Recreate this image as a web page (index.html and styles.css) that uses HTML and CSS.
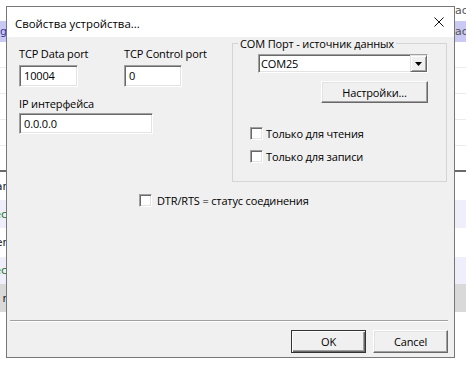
FILE: index.html
```html
<!DOCTYPE html>
<html>
<head>
<meta charset="utf-8">
<link rel="stylesheet" href="styles.css">
</head>
<body>
<div class="app">
  <div class="row h21"><div class="cl"></div><div class="cr dim">ac</div></div>
  <div class="row h21 sel"><div class="cl blue">g</div><div class="cr dim">ac</div></div>
  <div class="row h26 line"><div class="cl"></div><div class="cr"></div></div>
  <div class="row h26 line"><div class="cl"></div><div class="cr"></div></div>
  <div class="row h26 line"><div class="cl"></div><div class="cr"></div></div>
  <div class="row h26 line"><div class="cl"></div><div class="cr"></div></div>
  <div class="row h24"><div class="cl"></div><div class="cr"></div></div>
  <div class="divider"></div>
  <div class="row h28"><div class="cl">ar</div><div class="cr"></div></div>
  <div class="row h28 alt"><div class="cl green">ec</div><div class="cr"></div></div>
  <div class="row h29"><div class="cl">er</div><div class="cr"></div></div>
  <div class="row h27 alt"><div class="cl green">ec</div><div class="cr"></div></div>
  <div class="row h28 grey"><div class="cl">r</div><div class="cr"></div></div>
  <div class="row rest"><div class="cl"></div><div class="cr"></div></div>
</div>

<div class="dialog">
  <div class="titlebar">
    <span class="title">Свойства устройства...</span>
    <svg class="close" viewBox="0 0 10 10" width="10" height="10"><path d="M0.5 0.5L9.5 9.5M9.5 0.5L0.5 9.5" stroke="#111" stroke-width="1" fill="none"/></svg>
  </div>
  <div class="body">
    <div class="top">
      <div class="left">
        <div class="pair">
          <div class="field w59"><div class="lbl">TCP Data port</div><div class="edit">10004</div></div>
          <div class="field w58"><div class="lbl">TCP Control port</div><div class="edit">0</div></div>
        </div>
        <div class="field ip w134"><div class="lbl">IP интерфейса</div><div class="edit">0.0.0.0</div></div>
      </div>
      <fieldset class="group">
        <legend>COM Порт - источник данных</legend>
        <div class="gin">
          <div class="combo-wrap">
            <div class="combo"><span class="ctext">COM25</span><span class="drop"><svg viewBox="0 0 7 4" width="7" height="4"><polygon points="0,0 7,0 3.5,4" fill="#000"/></svg></span></div>
            <div class="btn setup">Настройки...</div>
          </div>
          <div class="chk first"><span class="box"></span><span>Только для чтения</span></div>
          <div class="chk second"><span class="box"></span><span>Только для записи</span></div>
        </div>
      </fieldset>
    </div>
    <div class="chk dtr"><span class="box"></span><span>DTR/RTS = статус соединения</span></div>
    <div class="sep"></div>
    <div class="buttons">
      <div class="btn ok">OK</div>
      <div class="btn">Cancel</div>
    </div>
  </div>
</div>
</body>
</html>
```

FILE: styles.css
```css
* { box-sizing: border-box; }
html, body { margin: 0; padding: 0; }
body {
  width: 466px;
  height: 368px;
  overflow: hidden;
  background: #fff;
  position: relative;
  font-family: "Open Sans", "Noto Sans", sans-serif;
  font-size: 11px;
  color: #000;
}

/* underlying application */
.app {
  width: 466px;
  height: 368px;
  display: flex;
  flex-direction: column;
  font-family: "DejaVu Sans", sans-serif;
  font-size: 11px;
  color: #222;
}
.row {
  display: flex;
  justify-content: space-between;
  align-items: center;
  flex: none;
}
.h21 { height: 21px; }
.h24 { height: 24px; }
.h26 { height: 26px; }
.h27 { height: 27px; }
.h28 { height: 28px; }
.h29 { height: 29px; }
.rest { flex: 1; }
.line { border-bottom: 1px solid #ececec; }
.sel { background: #c9c9f4; }
.alt { background: #efeffb; }
.grey { background: #d9d9d9; }
.divider { height: 2px; background: #6a6a6a; flex: none; }
.cl {
  width: 7px;
  overflow: hidden;
  white-space: nowrap;
  display: flex;
  justify-content: flex-end;
}
.cr {
  width: 11px;
  overflow: hidden;
  white-space: nowrap;
}
.dim { color: #555; }
.blue { color: #3a3a9a; }
.green { color: #2c7a2c; }

/* dialog window */
.dialog {
  position: absolute;
  left: 6px;
  top: 6px;
  width: 449px;
  height: 352px;
  border: 1px solid #777;
  background: #f0f0f0;
  display: flex;
  flex-direction: column;
  letter-spacing: -0.15px;
}
.titlebar {
  height: 30px;
  flex: none;
  background: #fff;
  display: flex;
  align-items: center;
  justify-content: space-between;
  padding: 2px 10px 0 8px;
  font-size: 11.4px;
  letter-spacing: 0;
}
.close { display: block; margin-top: -2px; }
.body {
  flex: 1;
  display: flex;
  flex-direction: column;
  padding: 0 6px 4px 3px;
}
.top {
  display: flex;
  justify-content: space-between;
  padding: 0 1px 0 9px;
}
.left { padding-top: 9px; }
.pair { display: flex; gap: 46px; }
.w59 { width: 59px; }
.w58 { width: 58px; }
.w134 { width: 134px; }
.lbl {
  height: 15px;
  line-height: 15px;
  white-space: nowrap;
}
.edit {
  margin-top: 4px;
  height: 22px;
  background: #fff;
  border: 1px solid;
  border-color: #a0a0a0 #fff #fff #a0a0a0;
  box-shadow: inset 1px 1px #696969, inset -1px -1px #e3e3e3;
  padding-left: 4px;
  line-height: 20px;
}
.ip { margin-top: 9px; }
.ip .edit { margin-top: 2px; height: 21px; line-height: 19px; }

.group {
  margin: 0;
  width: 215px;
  border: 1px solid #d5d5d5;
  padding: 0;
  min-width: 0;
}
.group legend {
  margin-left: 5px;
  padding: 0 2px;
  line-height: 13px;
  font-size: 11px;
}
.gin { padding: 4px 0 18px 17px; }
.combo-wrap {
  margin-left: 8px;
  width: 170px;
  display: flex;
  flex-direction: column;
  align-items: flex-end;
}
.combo {
  width: 170px;
  height: 19px;
  background: #fff;
  border: 1px solid;
  border-color: #a0a0a0 #fff #fff #a0a0a0;
  box-shadow: inset 1px 1px #696969, inset -1px -1px #e3e3e3;
  display: flex;
  align-items: center;
  justify-content: space-between;
  padding: 0 0 0 2px;
}
.ctext { line-height: 17px; }
.drop {
  width: 17px;
  height: 17px;
  background: #f0f0f0;
  border: 1px solid;
  border-color: #e3e3e3 #696969 #696969 #e3e3e3;
  box-shadow: inset 1px 1px #fff, inset -1px -1px #a0a0a0;
  display: flex;
  align-items: center;
  justify-content: center;
}
.drop svg { display: block; }
.btn {
  display: flex;
  align-items: center;
  justify-content: center;
  background: #f0f0f0;
  border: 1px solid;
  border-color: #fff #696969 #696969 #fff;
  box-shadow: inset -1px -1px #a0a0a0, inset 1px 1px #e3e3e3;
  white-space: nowrap;
}
.setup { margin-top: 8px; width: 107px; height: 22px; }
.chk {
  display: flex;
  align-items: center;
  gap: 3px;
  height: 13px;
  white-space: nowrap;
}
.box {
  width: 13px;
  height: 13px;
  flex: none;
  background: #fff;
  border: 1px solid;
  border-color: #a0a0a0 #fff #fff #a0a0a0;
  box-shadow: inset 1px 1px #696969, inset -1px -1px #e3e3e3;
}
.first { margin-top: 24px; }
.second { margin-top: 10px; }
.dtr { margin-top: 12px; margin-left: 129px; gap: 5px; }
.sep {
  margin-top: auto;
  height: 2px;
  border-top: 1px solid #a0a0a0;
  border-bottom: 1px solid #fff;
}
.buttons {
  margin-top: 8px;
  display: flex;
  justify-content: flex-end;
  gap: 7px;
}
.buttons .btn { width: 75px; height: 23px; }
.ok {
  border-color: #333;
  box-shadow: inset 1px 1px #fff, inset -1px -1px #696969, inset -2px -2px #a0a0a0;
}
```
